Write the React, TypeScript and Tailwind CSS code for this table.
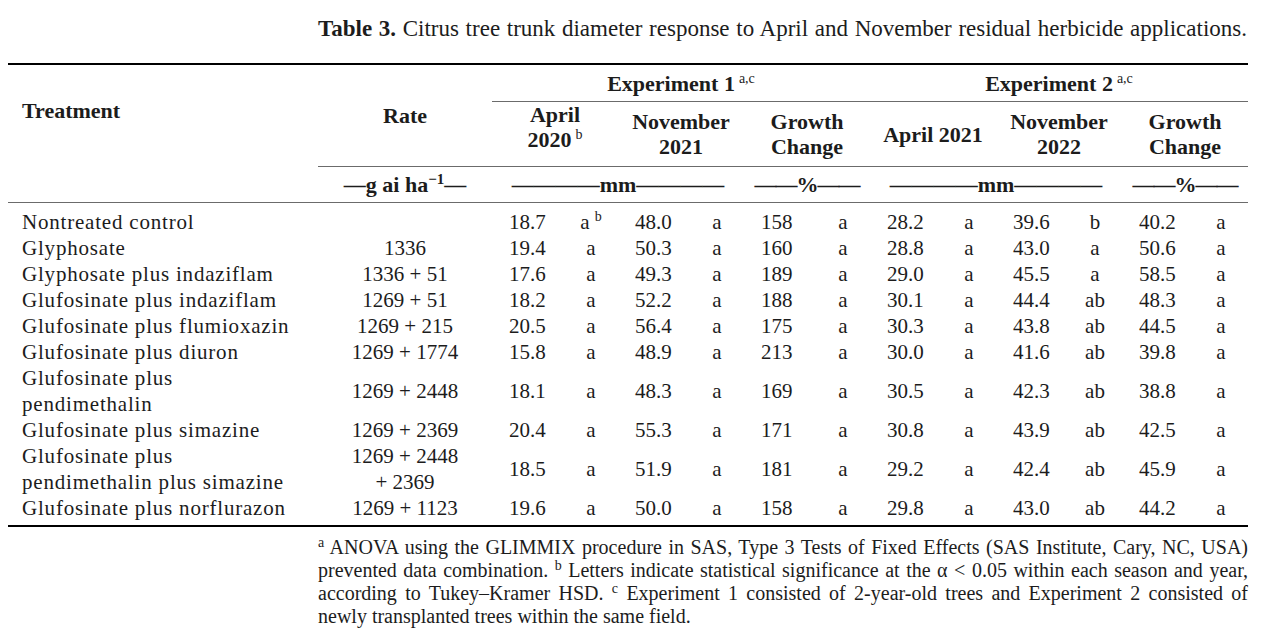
import React from "react";

type Row = {
  name: React.ReactNode;
  rate: React.ReactNode;
  vals: [string, React.ReactNode][];
  tall?: boolean;
};

const rows: Row[] = [
  {
    name: "Nontreated control",
    rate: "",
    vals: [
      ["18.7", <>a <sup className="text-[14px] relative -top-[8px]">b</sup></>],
      ["48.0", "a"],
      ["158", "a"],
      ["28.2", "a"],
      ["39.6", "b"],
      ["40.2", "a"],
    ],
  },
  { name: "Glyphosate", rate: "1336", vals: [["19.4", "a"], ["50.3", "a"], ["160", "a"], ["28.8", "a"], ["43.0", "a"], ["50.6", "a"]] },
  { name: "Glyphosate plus indaziflam", rate: "1336 + 51", vals: [["17.6", "a"], ["49.3", "a"], ["189", "a"], ["29.0", "a"], ["45.5", "a"], ["58.5", "a"]] },
  { name: "Glufosinate plus indaziflam", rate: "1269 + 51", vals: [["18.2", "a"], ["52.2", "a"], ["188", "a"], ["30.1", "a"], ["44.4", "ab"], ["48.3", "a"]] },
  { name: "Glufosinate plus flumioxazin", rate: "1269 + 215", vals: [["20.5", "a"], ["56.4", "a"], ["175", "a"], ["30.3", "a"], ["43.8", "ab"], ["44.5", "a"]] },
  { name: "Glufosinate plus diuron", rate: "1269 + 1774", vals: [["15.8", "a"], ["48.9", "a"], ["213", "a"], ["30.0", "a"], ["41.6", "ab"], ["39.8", "a"]] },
  {
    name: <>Glufosinate plus<br />pendimethalin</>,
    rate: "1269 + 2448",
    tall: true,
    vals: [["18.1", "a"], ["48.3", "a"], ["169", "a"], ["30.5", "a"], ["42.3", "ab"], ["38.8", "a"]],
  },
  { name: "Glufosinate plus simazine", rate: "1269 + 2369", vals: [["20.4", "a"], ["55.3", "a"], ["171", "a"], ["30.8", "a"], ["43.9", "ab"], ["42.5", "a"]] },
  {
    name: <>Glufosinate plus<br />pendimethalin plus simazine</>,
    rate: <>1269 + 2448<br />+ 2369</>,
    tall: true,
    vals: [["18.5", "a"], ["51.9", "a"], ["181", "a"], ["29.2", "a"], ["42.4", "ab"], ["45.9", "a"]],
  },
  { name: "Glufosinate plus norflurazon", rate: "1269 + 1123", vals: [["19.6", "a"], ["50.0", "a"], ["158", "a"], ["29.8", "a"], ["43.0", "ab"], ["44.2", "a"]] },
];

function Sup({ children }: { children: React.ReactNode }) {
  return <sup className="text-[14px] font-normal relative -top-[8px] ml-[4px]">{children}</sup>;
}

function SubHead({ top, bottom }: { top: React.ReactNode; bottom?: React.ReactNode }) {
  return (
    <div className="flex flex-col items-center justify-center text-center leading-[25px] font-bold">
      <span>{top}</span>
      {bottom && <span>{bottom}</span>}
    </div>
  );
}

export default function App() {
  return (
    <div className="w-[1280px] h-[630px] bg-white text-[#1c1c1c] font-['Liberation_Serif',serif] overflow-hidden">
      {/* caption */}
      <div className="h-[63px] pl-[318px] pr-[33px] pt-[15px] text-[23px] leading-[28px] text-justify [text-align-last:justify] whitespace-nowrap">
        <span className="font-bold">Table 3.</span> Citrus tree trunk diameter response to April and November residual herbicide applications.
      </div>

      <div className="mx-[8px] w-[1240px]">
        {/* header */}
        <div className="border-t-2 border-black border-b border-b-[#6b6b6b] grid grid-cols-[310px_174px_repeat(6,126px)] grid-rows-[37px_64px_36px] text-[22px]">
          <div className="row-start-1 row-span-2 col-start-1 pl-[14px] pt-[33px] leading-[26px] font-bold">Treatment</div>
          <div className="row-start-1 row-span-2 col-start-2 flex items-center justify-center font-bold">Rate</div>
          <div className="row-start-1 col-start-3 col-span-3 flex items-center justify-center border-b border-[#6b6b6b] font-bold">
            <span>
              Experiment 1<Sup>a,c</Sup>
            </span>
          </div>
          <div className="row-start-1 col-start-6 col-span-3 flex items-center justify-center border-b border-[#6b6b6b] font-bold">
            <span>
              Experiment 2<Sup>a,c</Sup>
            </span>
          </div>
          <div className="row-start-2 col-start-3">
            <SubHead top="April" bottom={<>2020<Sup>b</Sup></>} />
          </div>
          <div className="row-start-2 col-start-4 flex justify-center">
            <SubHead top="November" bottom="2021" />
          </div>
          <div className="row-start-2 col-start-5 flex justify-center">
            <SubHead top="Growth" bottom="Change" />
          </div>
          <div className="row-start-2 col-start-6 flex items-center justify-center font-bold">April 2021</div>
          <div className="row-start-2 col-start-7 flex justify-center">
            <SubHead top="November" bottom="2022" />
          </div>
          <div className="row-start-2 col-start-8 flex justify-center">
            <SubHead top="Growth" bottom="Change" />
          </div>

          <div className="row-start-3 col-start-2 border-t border-[#6b6b6b] flex items-center justify-center font-bold">
            <span>
              —g ai ha<sup className="text-[15px] relative -top-[8px]">−1</sup>—
            </span>
          </div>
          <div className="row-start-3 col-start-3 col-span-2 border-t border-[#6b6b6b] flex items-center justify-center font-bold">
            ————mm————
          </div>
          <div className="row-start-3 col-start-5 border-t border-[#6b6b6b] flex items-center justify-center font-bold tracking-[-1px]">
            ——%——
          </div>
          <div className="row-start-3 col-start-6 col-span-2 border-t border-[#6b6b6b] flex items-center justify-center font-bold">
            ————mm————
          </div>
          <div className="row-start-3 col-start-8 border-t border-[#6b6b6b] flex items-center justify-center font-bold tracking-[-1px]">
            ——%——
          </div>
        </div>

        {/* body */}
        <div className="border-b-2 border-black pt-[6px] pb-[4px] text-[21px]">
          {rows.map((r, i) => (
            <div
              key={i}
              className={`grid grid-cols-[310px_174px_repeat(6,72px_54px)] leading-[26px] ${r.tall ? "h-[52px]" : "h-[26px]"}`}
            >
              <div className="pl-[14px] tracking-[0.8px] flex items-center">
                <span>{r.name}</span>
              </div>
              <div className="flex items-center justify-center text-center">
                <span>{r.rate}</span>
              </div>
              {r.vals.map(([v, l], j) => (
                <React.Fragment key={j}>
                  <div className="pl-[17px] flex items-center">{v}</div>
                  <div className="flex items-center justify-center">
                    <span>{l}</span>
                  </div>
                </React.Fragment>
              ))}
            </div>
          ))}
        </div>
      </div>

      {/* footnotes */}
      <div className="pl-[318px] pr-[32px] pt-[9px] text-[20px] leading-[23px]">
        <div className="text-justify [text-align-last:justify] whitespace-nowrap">
          <sup className="text-[14px]">a</sup> ANOVA using the GLIMMIX procedure in SAS, Type 3 Tests of Fixed Effects (SAS Institute, Cary, NC, USA)
        </div>
        <div className="text-justify [text-align-last:justify] whitespace-nowrap">
          prevented data combination. <sup className="text-[14px]">b</sup> Letters indicate statistical significance at the α &lt; 0.05 within each season and year,
        </div>
        <div className="text-justify [text-align-last:justify] whitespace-nowrap">
          according to Tukey–Kramer HSD. <sup className="text-[14px]">c</sup> Experiment 1 consisted of 2-year-old trees and Experiment 2 consisted of
        </div>
        <div className="whitespace-nowrap">newly transplanted trees within the same field.</div>
      </div>
    </div>
  );
}
